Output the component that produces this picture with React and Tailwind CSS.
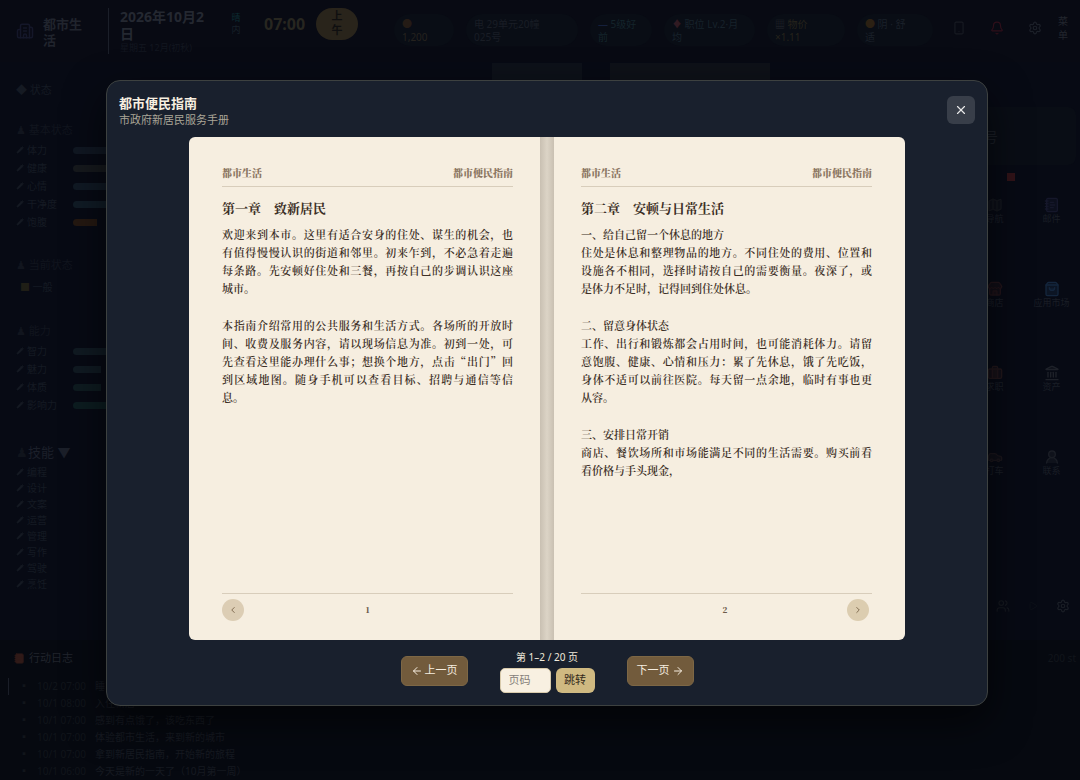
import {
  Building2, Smartphone, Bell, Settings, X, ArrowLeft, ArrowRight, ChevronLeft, ChevronRight,
  Pencil, Map, Store, Landmark, UserRound, Car, Briefcase, ShoppingBag,
  Users, Play, NotebookText,
} from 'lucide-react'

const chips = [
  { mark: '●', lines: ['', '1,200'], box: 'w-[60px] ml-9', tone: 'text-[#25221e]', markTone: 'text-[#241b15]' },
  { mark: '电', lines: ['29单元20幢', '025号'], box: 'w-28', tone: 'text-[#191d25]', markTone: '' },
  { mark: '—', lines: ['5级好', '前'], box: 'w-[62px]', tone: 'text-[#14242b]', markTone: 'text-[#15203c]' },
  { mark: '♦', lines: ['职位 Lv.2·月', '均'], box: 'w-[91px]', tone: 'text-[#17222b]', markTone: 'text-[#301a22]' },
  { mark: '▦', lines: ['物价', '×1.11'], box: 'w-[78px]', tone: 'text-[#25231b]', markTone: 'text-[#22252b]' },
  { mark: '●', lines: ['阴 · 舒', '适'], box: 'w-[76px]', tone: 'text-[#1a2029]', markTone: 'text-[#2b2013]' },
]

const vitals = [
  { label: '体力', bar: 'w-full bg-[#101722]' },
  { label: '健康', bar: 'w-full bg-[#16191d]' },
  { label: '心情', bar: 'w-full bg-[#101924]' },
  { label: '干净度', bar: 'w-full bg-[#101b25]' },
  { label: '饱腹', bar: 'w-6 bg-[#241811]' },
]

const abilities = [
  { label: '智力', bar: 'w-full bg-[#101a22]' },
  { label: '魅力', bar: 'w-7 bg-[#101a22]' },
  { label: '体质', bar: 'w-7 bg-[#0e1b20]' },
  { label: '影响力', bar: 'w-full bg-[#0c1c20]' },
]

const skills = ['编程', '设计', '文案', '运营', '管理', '写作', '驾驶', '烹饪']

const apps = [
  { label: '导航', icon: Map, tone: 'text-[#14171e]' },
  { label: '邮件', icon: NotebookText, tone: 'text-[#15172a]' },
  { label: '商店', icon: Store, tone: 'text-[#21141a]' },
  { label: '应用市场', icon: ShoppingBag, tone: 'text-[#14263d]' },
  { label: '求职', icon: Briefcase, tone: 'text-[#21171b]' },
  { label: '资产', icon: Landmark, tone: 'text-[#1e2129]' },
  { label: '打车', icon: Car, tone: 'text-[#1a161c]' },
  { label: '联系', icon: UserRound, tone: 'text-[#1b1e26]' },
]

const logs = [
  { time: '10/2 07:00', text: '睡了一觉' },
  { time: '10/1 08:00', text: '入住新居' },
  { time: '10/1 07:00', text: '感到有点饿了,该吃东西了' },
  { time: '10/1 07:00', text: '体验都市生活,来到新的城市' },
  { time: '10/1 07:00', text: '拿到新居民指南,开始新的旅程' },
  { time: '10/1 06:00', text: '今天是新的一天了(10月第一周)' },
]

const pages = [
  {
    number: 1,
    chapter: ['第一章', '致新居民'],
    paragraphs: [
      [
        '欢迎来到本市。这里有适合安身的住处、谋生的机会,也',
        '有值得慢慢认识的街道和邻里。初来乍到,不必急着走遍',
        '每条路。先安顿好住处和三餐,再按自己的步调认识这座',
        '城市。',
      ],
      [
        '本指南介绍常用的公共服务和生活方式。各场所的开放时',
        '间、收费及服务内容,请以现场信息为准。初到一处,可',
        '先查看这里能办理什么事;想换个地方,点击“出门”回',
        '到区域地图。随身手机可以查看目标、招聘与通信等信',
        '息。',
      ],
    ],
  },
  {
    number: 2,
    chapter: ['第二章', '安顿与日常生活'],
    paragraphs: [
      [
        '一、给自己留一个休息的地方',
        '住处是休息和整理物品的地方。不同住处的费用、位置和',
        '设施各不相同,选择时请按自己的需要衡量。夜深了,或',
        '是体力不足时,记得回到住处休息。',
      ],
      [
        '二、留意身体状态',
        '工作、出行和锻炼都会占用时间,也可能消耗体力。请留',
        '意饱腹、健康、心情和压力:累了先休息,饿了先吃饭,',
        '身体不适可以前往医院。每天留一点余地,临时有事也更',
        '从容。',
      ],
      [
        '三、安排日常开销',
        '商店、餐饮场所和市场能满足不同的生活需要。购买前看',
        '看价格与手头现金,',
      ],
    ],
  },
]

// Chinese body text uses full-width punctuation
const fullWidth = (text) =>
  text.replace(/[,;:()]/g, (c) => String.fromCharCode(c.charCodeAt(0) + 0xfee0))

function TopBar() {
  return (
    <header className="h-[62px] shrink-0 flex items-start bg-[#080a13] pl-4 whitespace-nowrap overflow-hidden">
      <Building2 className="w-[18px] h-[18px] mt-[22px] text-[#141729]" />
      <div className="ml-[9px] mt-4 w-[56px] text-[13px] leading-4 font-bold text-[#20242d]">
        都市生<br />活
      </div>
      <div className="ml-[9px] mt-2 h-[46px] w-px bg-[#1b1f29]" />
      <div className="ml-[11px] mt-2 w-[108px] font-bold text-[#242831]">
        <div className="text-sm leading-[17px]">2026年10月2<br />日</div>
        <div className="text-[9px] leading-3 font-normal text-[#131720]">星期五 12月(初秋)</div>
      </div>
      <div className="mt-3 w-4 text-center text-[9px] leading-3 text-[#172129]">
        <span className="text-[#0c2c32]">晴</span><br />内
      </div>
      <div className="ml-5 mt-3 w-[52px] text-base leading-6 font-bold text-[#272620]">07:00</div>
      <div className="mt-2 w-[42px] h-8 rounded-full bg-[#29241b] text-center text-[11px] leading-[14px] font-bold text-[#0f0f10] pt-px">
        上<br />午
      </div>
      <div className="flex gap-3 mt-[14px]">
        {chips.map((chip, i) => (
          <div key={i} className={`h-8 shrink-0 rounded-full bg-[#090d15] px-2 pt-1 text-[10px] leading-[13px] ${chip.box} ${chip.tone}`}>
            <span className={chip.markTone}>{chip.mark}</span> {chip.lines[0]}
            <br />
            {chip.lines[1]}
          </div>
        ))}
      </div>
      <div className="ml-auto mt-[14px] flex items-center gap-6 pr-3 text-[#1c2029]">
        <Smartphone className="w-[14px] h-[14px] text-[#171a22]" />
        <Bell className="w-[14px] h-[14px] text-[#2e0f1a]" />
        <Settings className="w-[14px] h-[14px]" />
        <span className="text-[10px] leading-[14px] -ml-2 text-[#22262e]">菜<br />单</span>
      </div>
    </header>
  )
}

function StatRow({ label, bar }) {
  return (
    <li className="flex items-center h-[18px]">
      <Pencil className="w-2 h-2 mr-[3px] fill-current" />
      <span className="w-[46px] text-[10px]">{label}</span>
      <span className="flex-1">
        <span className={`block h-[7px] rounded-l-full ${bar}`} />
      </span>
    </li>
  )
}

function Sidebar() {
  return (
    <aside className="w-[106px] shrink-0 pl-4 pt-5 text-[11px] leading-4 text-[#151a23]">
      <h2>◆ 状态</h2>
      <h2 className="mt-6 text-[#11151e]">♟ 基本状态</h2>
      <ul className="mt-[3px]">
        {vitals.map((row) => <StatRow key={row.label} {...row} />)}
      </ul>
      <h2 className="mt-[26px] text-[#11151e]">♟ 当前状态</h2>
      <p className="mt-[6px] pl-1 text-[10px]">
        <span className="text-[#1f1e16]">■</span> 一般
      </p>
      <h2 className="mt-[28px] text-[#11151e]">♟ 能力</h2>
      <ul className="mt-[3px]">
        {abilities.map((row) => <StatRow key={row.label} {...row} />)}
      </ul>
      <h2 className="mt-7 text-[13px] leading-5 text-[#1b1f29]">
        <span className="text-[#10141c]">♟</span>技能 ▼
      </h2>
      <ul className="mt-[2px]">
        {skills.map((skill) => (
          <li key={skill} className="flex items-center h-4 text-[10px]">
            <Pencil className="w-2 h-2 mr-[3px] fill-current" />
            {skill}
          </li>
        ))}
      </ul>
    </aside>
  )
}

function AppPanel() {
  return (
    <aside className="w-[114px] shrink-0 ml-auto pt-[45px] text-[#1a1e26]">
      <div className="h-[58px] mr-1 rounded-lg bg-[#090d15] pl-[18px] pt-5 text-sm leading-5">号</div>
      <div className="mt-2 ml-[41px] w-2 h-2 bg-[#301318]" />
      <div className="mt-4 grid grid-cols-2">
        {apps.map((app) => (
          <div key={app.label} className="h-[84px] flex flex-col items-center text-[9px] leading-3">
            <app.icon className={`w-4 h-4 fill-current/40 ${app.tone}`} />
            {app.label}
          </div>
        ))}
      </div>
      <div className="mt-[66px] flex items-center justify-between pl-[30px] pr-[10px]">
        <Users className="w-[14px] h-[14px] text-[#15181f]" />
        <Play className="w-[10px] h-[10px] text-[#0f1219]" />
        <Settings className="w-[14px] h-[14px]" />
      </div>
    </aside>
  )
}

function ActionLog() {
  return (
    <section className="h-[140px] shrink-0 overflow-hidden bg-[#060910] pl-2 pt-2 text-[#11151b]">
      <h2 className="flex items-center gap-1 pl-[6px] pr-1 text-[11px] leading-5 text-[#20242c]">
        <NotebookText className="w-[11px] h-[11px] text-[#301a18] fill-current" />
        行动日志
        <span className="ml-auto text-[10px] text-[#11151b]">200 st</span>
      </h2>
      <ul className="mt-[10px] text-[10px] leading-[17px] whitespace-nowrap">
        {logs.map((log, i) => (
          <li key={i} className={`flex gap-2 pl-[10px] border-l ${i === 0 ? 'border-[#1a1e28]' : 'border-transparent'}`}>
            <span>▪</span>
            <span className="w-[50px]">{log.time}</span>
            <span className="text-[#161a21]">{fullWidth(log.text)}</span>
          </li>
        ))}
      </ul>
    </section>
  )
}

function BookPage({ page, side }) {
  const isLeft = side === 'left'
  return (
    <article
      className={`flex-1 min-w-0 flex flex-col bg-[#f6eee0] pt-7 pb-[19px] text-[#3d3027] ${
        isLeft ? 'pl-[33px] pr-[27px]' : 'pl-[27px] pr-[33px]'
      }`}
    >
      <div className="flex justify-between border-b border-[#d8cdbb] pb-[5px] text-[10px] leading-4 font-black text-[#8c7763]">
        <span>都市生活</span>
        <span>都市便民指南</span>
      </div>
      <h3 className="mt-[11px] text-[13px] leading-5 font-bold">{page.chapter.join('\u3000')}</h3>
      <div className="mt-[7px] flex-1 flex flex-col gap-[19px] text-[11px] leading-[18px] font-semibold">
        {page.paragraphs.map((lines, i) => (
          <p key={i}>
            {lines.map((line) => (
              <span
                key={line}
                className={`block whitespace-nowrap ${line.length > 22 ? '[text-align-last:justify]' : ''}`}
              >
                {fullWidth(line)}
              </span>
            ))}
          </p>
        ))}
      </div>
      <div className={`grid grid-cols-[22px_1fr_22px] items-center border-t border-[#d8cdbb] pt-[5px] text-center ${isLeft ? '' : 'pr-[3px]'}`}>
        {isLeft && (
          <button type="button" aria-label="上一页" className="w-[22px] h-[22px] rounded-full bg-[#dccdb4] text-[#705a3e] flex items-center justify-center">
            <ChevronLeft className="w-[10px] h-[10px]" />
          </button>
        )}
        <span className="col-start-2 text-[8px] leading-4 font-black text-[#6d5b4b]">{page.number}</span>
        {!isLeft && (
          <button type="button" aria-label="下一页" className="w-[22px] h-[22px] rounded-full bg-[#dccdb0] text-[#705a3e] flex items-center justify-center">
            <ChevronRight className="w-[10px] h-[10px]" />
          </button>
        )}
      </div>
    </article>
  )
}

function GuideDialog() {
  const navButton = 'h-[30px] w-[67px] flex items-center justify-center gap-[2px] rounded-md border border-[#7d6745] bg-[#725b3c] text-[11px] text-[#f6eee0]'
  return (
    <div className="absolute inset-0 pt-20 pb-[74px] pl-[106px] pr-[92px]">
      <div
        role="dialog"
        aria-labelledby="guide-title"
        className="h-full flex flex-col rounded-[14px] border border-[#3d4140] bg-[#19202d] p-3 shadow-[0_16px_40px_rgba(0,0,0,0.6)]"
      >
        <div className="flex items-center justify-between h-[34px] mb-[10px] shrink-0">
          <div>
            <h2 id="guide-title" className="text-[13px] leading-5 font-bold text-[#f7efe0]">都市便民指南</h2>
            <p className="text-[11px] leading-[14px] text-[#aaa597]">市政府新居民服务手册</p>
          </div>
          <button type="button" aria-label="关闭" className="w-7 h-7 flex items-center justify-center rounded-md bg-[#383e49] text-[#e8e8e8]">
            <X className="w-[14px] h-[14px]" />
          </button>
        </div>

        <div className="flex-1 min-h-0 w-full max-w-[716px] mx-auto flex rounded-md overflow-hidden font-['Noto_Serif_CJK_SC','Noto_Sans_CJK_SC',serif]">
          <BookPage page={pages[0]} side="left" />
          <div className="w-[14px] shrink-0 bg-linear-to-r from-[#c9c0b2] via-[#dcd4c6] to-[#c9c0b2]" />
          <BookPage page={pages[1]} side="right" />
        </div>

        <div className="flex items-center justify-center gap-8 pt-2 shrink-0">
          <button type="button" className={navButton}>
            <ArrowLeft className="w-3 h-3" />上一页
          </button>
          <form onSubmit={(e) => e.preventDefault()} className="text-center">
            <label htmlFor="page-no" className="block text-[10px] leading-[18px] text-[#f1eadc]">第 1–2 / 20 页</label>
            <div className="mt-[2px] flex gap-[5px] h-[25px]">
              <input
                id="page-no"
                placeholder="页码"
                className="w-[51px] rounded-[5px] border border-[#d9cbac] bg-[#f8f0e1] px-2 text-[11px] text-[#3d3027] placeholder:text-[#85807a]"
              />
              <button type="submit" className="w-[39px] rounded-md bg-[#cfb981] text-[11px] text-[#33291a]">跳转</button>
            </div>
          </form>
          <button type="button" className={navButton}>
            下一页<ArrowRight className="w-3 h-3" />
          </button>
        </div>
      </div>
    </div>
  )
}

export default function App() {
  return (
    <div lang="zh-CN" className="relative h-screen overflow-hidden flex flex-col bg-[#070a14] font-['Noto_Sans','Noto_Sans_CJK_SC',sans-serif]">
      <TopBar />
      <main className="flex-1 min-h-0 flex overflow-hidden">
        <Sidebar />
        <div className="flex-1 flex justify-center gap-7 pt-px pl-[190px]">
          <div className="w-[90px] h-5 bg-[#0d1119]" />
          <div className="w-40 h-5 bg-[#0e1118]" />
        </div>
        <AppPanel />
      </main>
      <ActionLog />
      <GuideDialog />
    </div>
  )
}
